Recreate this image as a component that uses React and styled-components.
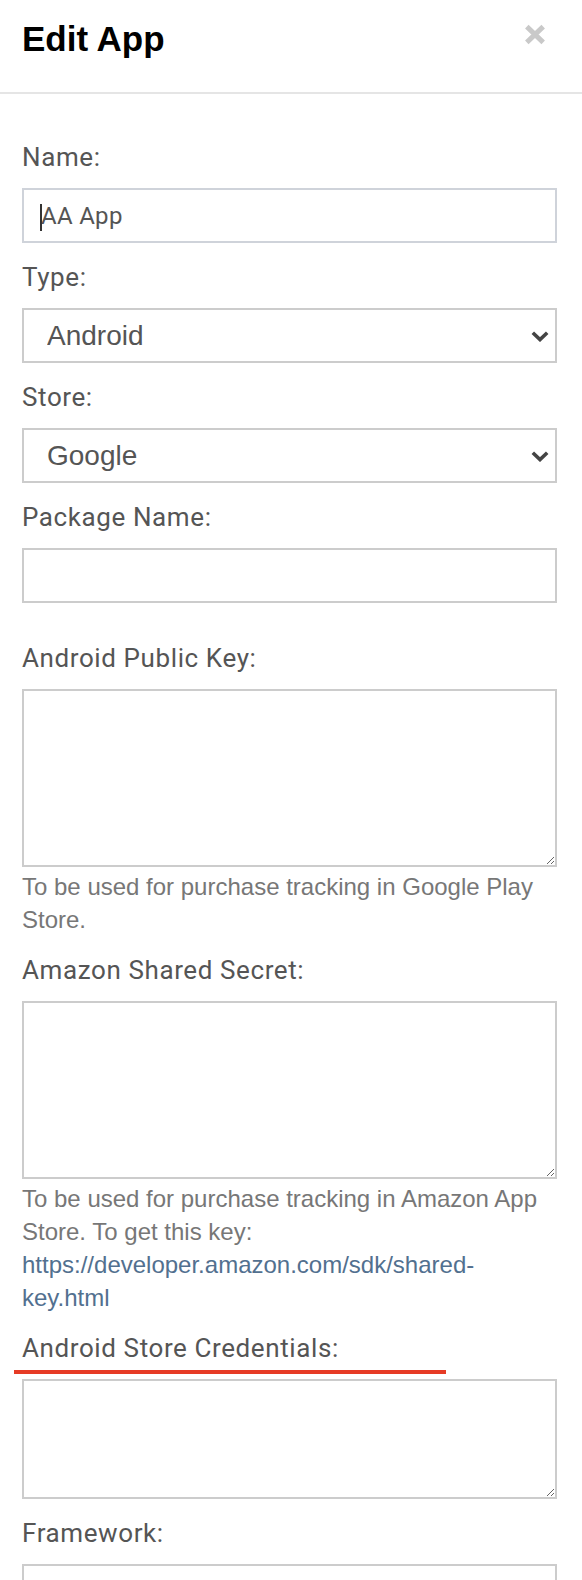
import React from 'react'
import styled, { createGlobalStyle } from 'styled-components'

const GlobalStyle = createGlobalStyle`
  html, body {
    margin: 0;
    padding: 0;
    background: #fff;
    overflow: hidden;
  }
  * {
    box-sizing: border-box;
  }
`

const CloseIcon = () => (
  <svg width="22" height="21" viewBox="0 0 22 21">
    <path d="M2.8 2.6 L19.2 18.4 M19.2 2.6 L2.8 18.4" stroke="#c9c9c9" strokeWidth="5" />
  </svg>
)

const Chevron = () => (
  <svg width="18" height="11" viewBox="0 0 18 11">
    <path d="M1.8 1.8 L9 8.6 L16.2 1.8" fill="none" stroke="#444" strokeWidth="3.6" />
  </svg>
)

const App = () => (
  <Modal>
    <GlobalStyle />
    <Header>
      <Title>Edit App</Title>
      <CloseButton aria-label="Close">
        <CloseIcon />
      </CloseButton>
    </Header>
    <Body>
      <Group>
        <Label>Name:</Label>
        <Field>
          <TextInput $focused defaultValue="AA App" />
          <Caret />
        </Field>
      </Group>
      <Group>
        <Label>Type:</Label>
        <Field>
          <Select defaultValue="android">
            <option value="android">Android</option>
            <option value="ios">iOS</option>
          </Select>
          <SelectArrow>
            <Chevron />
          </SelectArrow>
        </Field>
      </Group>
      <Group>
        <Label>Store:</Label>
        <Field>
          <Select defaultValue="google">
            <option value="google">Google</option>
            <option value="amazon">Amazon</option>
          </Select>
          <SelectArrow>
            <Chevron />
          </SelectArrow>
        </Field>
      </Group>
      <Group $space={40}>
        <Label>Package Name:</Label>
        <TextInput />
      </Group>
      <Group>
        <Label>Android Public Key:</Label>
        <TextArea $height={178} />
        <Help>To be used for purchase tracking in Google Play Store.</Help>
      </Group>
      <Group>
        <Label>Amazon Shared Secret:</Label>
        <TextArea $height={178} />
        <Help>
          To be used for purchase tracking in Amazon App Store. To get this key:{' '}
          <HelpLink href="#">https://developer.amazon.com/sdk/shared-key.html</HelpLink>
        </Help>
      </Group>
      <Group>
        <Label $marked>Android Store Credentials:</Label>
        <TextArea $height={120} />
      </Group>
      <Group>
        <Label>Framework:</Label>
        <TextInput />
      </Group>
    </Body>
  </Modal>
)

export default App

const Modal = styled.div`
  width: 582px;
  background: #fff;
`

const Header = styled.div`
  display: flex;
  justify-content: space-between;
  align-items: flex-start;
  padding: 20px 36px 34px 22px;
  border-bottom: 2px solid #e5e5e5;
`

const Title = styled.h2`
  margin: 0;
  font-family: 'Liberation Sans', Arial, sans-serif;
  font-weight: bold;
  font-size: 35px;
  line-height: 38px;
  color: #000;
`

const CloseButton = styled.button`
  display: flex;
  margin-top: 4px;
  padding: 0;
  border: 0;
  background: none;
  cursor: pointer;
`

const Body = styled.div`
  padding: 48px 25px 0 22px;
`

const Group = styled.div`
  margin-bottom: ${p => p.$space || 19}px;
`

const Label = styled.label`
  position: relative;
  display: block;
  margin-bottom: 16px;
  font-family: Roboto, 'Noto Sans', sans-serif;
  font-size: 26px;
  line-height: 30px;
  letter-spacing: 0.6px;
  color: #555;

  ${p =>
    p.$marked &&
    `
    &::after {
      content: '';
      position: absolute;
      left: -8px;
      top: 37px;
      width: 432px;
      height: 4px;
      background: #e63b25;
    }
  `}
`

const Field = styled.div`
  position: relative;
`

const TextInput = styled.input`
  display: block;
  width: 100%;
  height: 55px;
  padding: 0 17px;
  border: 2px solid ${p => (p.$focused ? '#cfd3da' : '#cccccc')};
  border-radius: 0;
  outline: none;
  font-family: Roboto, 'Noto Sans', sans-serif;
  font-size: 24px;
  letter-spacing: 0.3px;
  color: #555;
  background: #fff;
`

const Caret = styled.span`
  position: absolute;
  left: 18px;
  top: 16px;
  width: 2px;
  height: 27px;
  background: #333;
`

const Select = styled.select`
  display: block;
  width: 100%;
  height: 55px;
  padding: 0 40px 0 23px;
  border: 2px solid #cccccc;
  border-radius: 0;
  outline: none;
  appearance: none;
  font-family: 'Liberation Sans', Arial, sans-serif;
  font-size: 28px;
  color: #555;
  background: #fff;
`

const SelectArrow = styled.span`
  position: absolute;
  right: 8px;
  top: 23px;
  display: flex;
  pointer-events: none;
`

const TextArea = styled.textarea`
  display: block;
  width: 100%;
  height: ${p => p.$height}px;
  padding: 10px 17px;
  border: 2px solid #cccccc;
  border-radius: 0;
  outline: none;
  resize: vertical;
  font-family: Roboto, 'Noto Sans', sans-serif;
  font-size: 24px;
  color: #555;
  background: #fff;
`

const Help = styled.p`
  margin: 3px 0 0;
  font-family: 'Liberation Sans', Arial, sans-serif;
  font-size: 24px;
  line-height: 33px;
  color: #777;
`

const HelpLink = styled.a`
  color: #52708f;
  text-decoration: none;
`
